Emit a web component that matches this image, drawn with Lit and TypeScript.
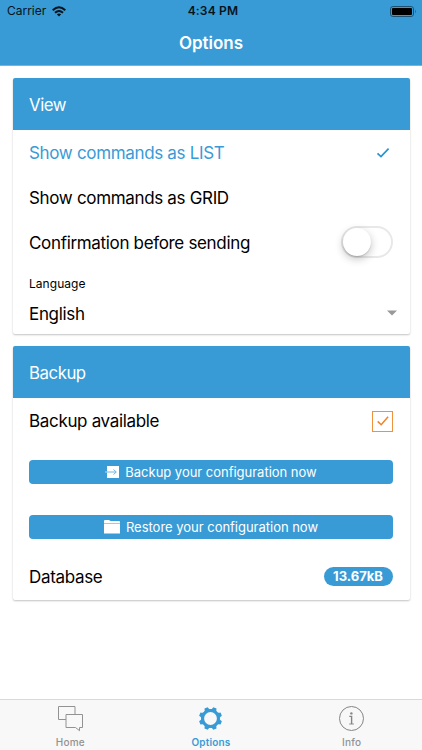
import { LitElement, html, css, svg } from "lit";
import { customElement } from "lit/decorators.js";

const teeth = [0, 45, 90, 135, 180, 225, 270, 315];

@customElement("app-root")
export class AppRoot extends LitElement {
  static styles = css`
    :host { display: flex; flex-direction: column; height: 750px; box-sizing: border-box; background: #fff;
      font-family: Inter, "Liberation Sans", sans-serif; color: #000; overflow: hidden; }
    * { box-sizing: border-box; }
    svg { display: block; flex: none; }
    .bar { background: #389bd6; height: 66px; flex: none; border-bottom: 1px solid #73b5df; }
    .status { height: 22px; display: grid; grid-template-columns: 1fr auto 1fr; align-items: center; padding: 0 5px 0 7px; font-size: 12px; line-height: 22px; color: #07131c; }
    .carrier { display: flex; align-items: center; gap: 6px; letter-spacing: -.02px; }
    .time { font-weight: 600; letter-spacing: .2px; padding-left: 2px; }
    .battery { justify-self: end; }
    .title { text-align: center; color: #fff; font-size: 17px; font-weight: 600; line-height: 42px; }
    main { flex: 1; padding: 12px 12px 12px 12.5px; display: flex; flex-direction: column; gap: 12px; }
    .card { border-radius: 2px; overflow: hidden; box-shadow: 0 1px 2px rgba(0,0,0,.24); flex: none; }
    .view { height: 256px; }
    .backup { height: 254px; }
    .head { height: 52px; background: #389bd6; color: #fff; font-size: 16.8px; line-height: 54px; padding-left: 16.5px; letter-spacing: -.45px; }
    .row { height: 45px; display: flex; align-items: center; justify-content: space-between; padding: 0 17px 0 16.5px; font-size: 17px; letter-spacing: -.33px; }
    .active { color: #389bd6; }
    .label { font-size: 12px; line-height: 16px; padding: 11px 17px 0 16.5px; letter-spacing: .05px; }
    .select { height: 44px; padding-right: 13.5px; }
    .toggle { width: 52px; height: 32px; border: 2px solid #e8e8e8; border-radius: 16px; margin-top: -1px; }
    .knob { width: 28px; height: 28px; border-radius: 50%; background: #fff; box-shadow: 0 3px 9px rgba(0,0,0,.24), 0 1px 1px rgba(0,0,0,.14); }
    .check { width: 21px; height: 21px; margin-top: 1px; border: 1px solid #f0923c; display: grid; place-items: center; }
    .button { height: 24px; margin: 0 17px 0 16.5px; background: #389bd6; border-radius: 4px; color: #fff; font-size: 13px; letter-spacing: -.02px; display: flex; align-items: center; justify-content: center; padding-bottom: 1px; }
    .one { margin-top: 17px; }
    .two { margin-top: 31px; }
    .data { margin-top: 15px; }
    .badge { background: #389bd6; color: #fff; font-size: 13px; font-weight: 700; letter-spacing: 0; line-height: 19px; height: 19px; width: 69px; border-radius: 10px; text-align: center; padding-right: 1px; }
    .tabs { height: 51px; flex: none; background: #f8f8f8; border-top: 1px solid #d9d9d9; display: grid; grid-template-columns: repeat(3, 1fr); }
    .tab { display: flex; flex-direction: column; align-items: center; color: #929292; font-size: 10px; line-height: 12px; padding-top: 6px; gap: 5px; font-weight: 500; letter-spacing: .2px; }
    .tab svg { overflow: visible; }
    .tab.current { color: #389bd6; font-weight: 600; }
  `;

  render() {
    return html`
      <header class="bar">
        <div class="status">
          <div class="carrier"><span>Carrier</span>
            <svg width="14" height="11" viewBox="0 0 14 11" fill="none" stroke="#07131c" stroke-width="2"><path d="M.7 4.2Q7-1.6 13.3 4.2M3 6.8q4-3.6 8 0"/><path d="M4.8 8.3q2.2-1.8 4.4 0L7 10.6z" fill="#07131c" stroke="none"/></svg>
          </div>
          <div class="time">4:34 PM</div>
          <svg class="battery" width="27" height="11" viewBox="0 0 27 11"><rect x=".5" y=".5" width="23" height="10" rx="2.4" fill="none" stroke="#1c5375"/><rect x="2" y="2" width="20" height="7" rx="1" fill="#000"/><path d="M25 3.6q1.5 1.9 0 3.8z" fill="#1c5375"/></svg>
        </div>
        <div class="title">Options</div>
      </header>
      <main>
        <section class="card view">
          <div class="head">View</div>
          <div class="row active"><span>Show commands as LIST</span>
            <svg width="20" height="12" viewBox="0 0 20 12" fill="none" stroke="#2f94d2" stroke-width="1.8"><path d="M4.5 6.3 8 9.6 15.6 1.7"/></svg></div>
          <div class="row"><span>Show commands as GRID</span></div>
          <div class="row"><span>Confirmation before sending</span><div class="toggle"><div class="knob"></div></div></div>
          <div class="label">Language</div>
          <div class="row select"><span>English</span><svg width="10" height="9" viewBox="0 0 10 9"><path d="M0 .5h10L5 5.5z" fill="#999"/></svg></div>
        </section>
        <section class="card backup">
          <div class="head">Backup</div>
          <div class="row"><span>Backup available</span><div class="check">
            <svg width="14" height="12" viewBox="0 0 14 12" fill="none" stroke="#ee842d" stroke-width="1.5"><path d="M1.7 6.4 5.2 9.7 12.1 1.8"/></svg></div></div>
          <div class="button one"><svg width="20" height="14" viewBox="0 0 20 14"><path d="M2 1h12v12H2z" fill="#fff"/><path d="M0 7h2" stroke="#b5daef"/><path d="M2 7h9M8.5 4.5 11.3 7 8.5 9.5" stroke="#6fb6e1" fill="none"/></svg><span>Backup your configuration now</span></div>
          <div class="button two"><svg width="22" height="14" viewBox="0 0 22 14"><path d="M0 3V1q0-1 1-1h4l1.5 1H15q1 0 1 1v1z" fill="#fff"/><path d="M0 3h16v1H0z" fill="#9bcdea"/><path d="M0 4h16v9.5H0z" fill="#fff"/></svg><span>Restore your configuration now</span></div>
          <div class="row data"><span>Database</span><div class="badge">13.67kB</div></div>
        </section>
      </main>
      <nav class="tabs">
        <div class="tab"><svg width="25" height="25" viewBox="0 0 25 25" fill="none" stroke="#929292"><path d="M8 13.5H.5V.5h16.5V8M8 8.5h16.5v13H21.5v3.2l-4-3.2H8z"/></svg><span>Home</span></div>
        <div class="tab current"><svg width="25" height="25" viewBox="-12.5 -12.5 25 25"><circle r="7.9" fill="none" stroke="#389bd6" stroke-width="3"/>${teeth.map((a) => svg`<path d="M-4-8Q-2-8.8-1.7-11.6H1.7Q2-8.8 4-8z" fill="#389bd6" transform="rotate(${a + 22.5})"/>`)}</svg><span>Options</span></div>
        <div class="tab"><svg width="25" height="25" viewBox="0 0 25 25" fill="none" stroke="#858585"><circle cx="12.5" cy="12.5" r="12"/><path d="M10.3 10.4h2.3V18" stroke-width="1.4"/><path d="M10.2 18h4.7" stroke-width=".9"/><circle cx="12.4" cy="7.4" r="1.2" fill="#858585" stroke="none"/></svg><span>Info</span></div>
      </nav>`;
  }
}
